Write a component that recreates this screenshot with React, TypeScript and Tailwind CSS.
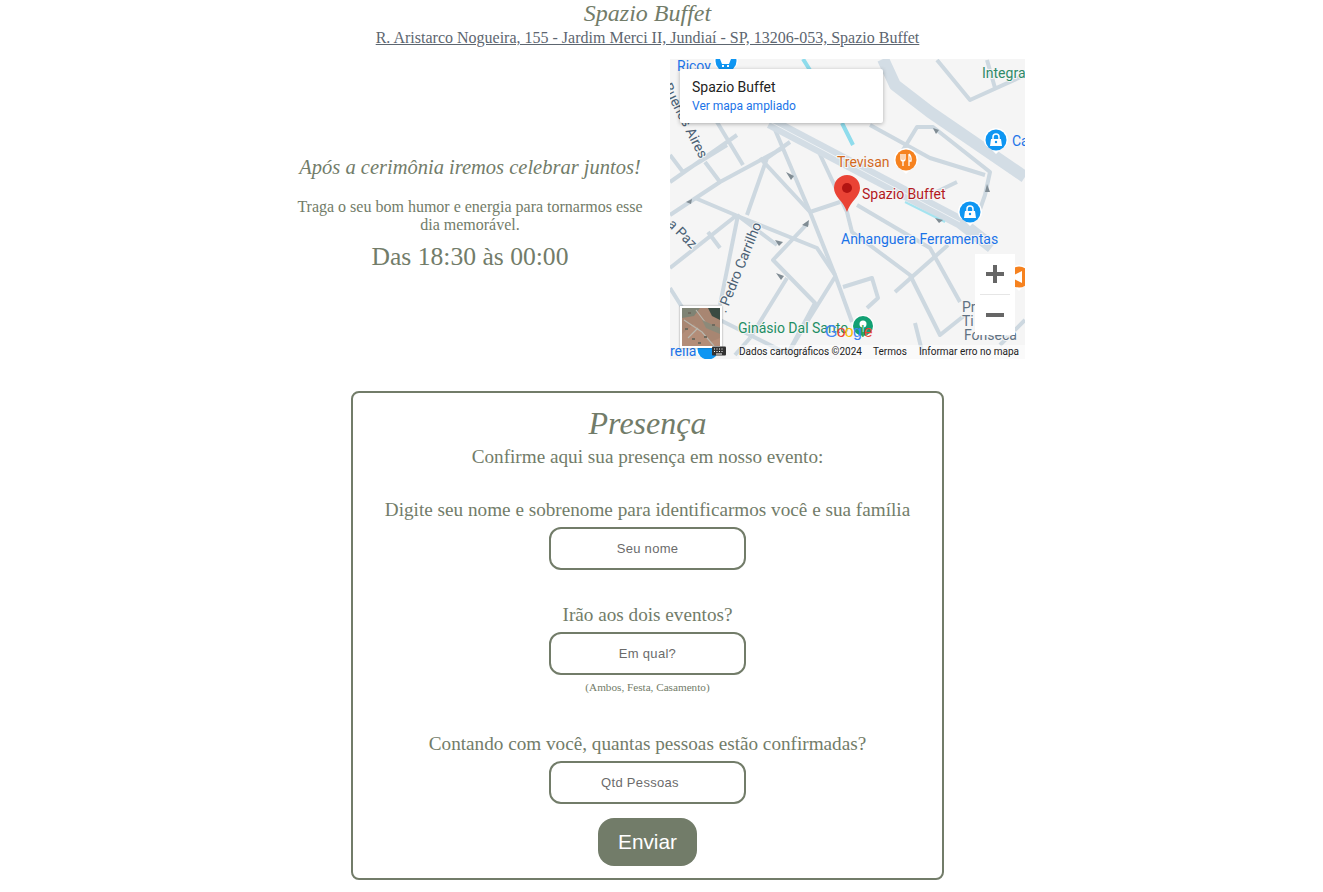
const serif = "font-['Liberation_Serif',serif]";
const script = "font-['Liberation_Serif',serif] italic font-normal";
const roboto = { fontFamily: "Roboto, sans-serif" };

const roads = [
  "M773 125 L810 212 L835 275 L852 322",
  "M808 223 L773 260 L815 303 L787 355",
  "M737 215 L777 245 M740 217 L817 248 L835 275",
  "M817 148 L847 212 L852 232 L910 275 L940 335 L965 315",
  "M857 205 L930 248 L960 302",
  "M948 245 L895 292",
  "M843 287 L872 278 L878 298 L867 308",
  "M835 277 L807 322 L787 355 M787 278 L750 338",
  "M915 323 L923 355 M738 215 L720 305 M708 232 L720 248 M737 215 L670 268",
  "M670 288 L687 315 M670 182 L737 135 M717 122 L743 165 M670 155 L683 172 L727 145",
  "M705 162 L720 182 M783 148 L720 182 L670 215 M790 142 L767 158 L747 215",
  "M760 158 L810 212 M695 198 L740 217 M810 212 L840 202",
  "M937 60 L970 100 L1025 75 M987 60 L995 88",
  "M903 150 L917 127 L933 127 L990 172 L985 195 L978 215",
  "M870 125 L930 158 L985 175 M957 182 L930 195",
  "M720 320 L790 355 M1000 345 L1025 320 M750 338 L735 355",
];

function Pin({ x, y, color }: { x: number; y: number; color: string }) {
  return (
    <g>
      <path d={`M${x - 12} ${y} a12 12 0 1 1 24 0 q0 6 -6 8 l-6 6 l-6 -6 q-6 -2 -6 -8z`} fill="#fff" />
      <circle cx={x} cy={y} r="10.5" fill={color} />
    </g>
  );
}

function Bag({ x, y }: { x: number; y: number }) {
  return (
    <g>
      <path d={`M${x - 3} ${y - 1} v-2 a3 3 0 0 1 6 0 v2`} fill="none" stroke="#fff" strokeWidth="1.500" />
      <path d={`M${x - 5} ${y - 1} h10 l1 7 h-12z`} fill="#fff" />
      <circle cx={x} cy={y + 2} r="1.200" fill="#0f96f2" />
    </g>
  );
}

function Label({ x, y, fill, children, transform }: { x?: number; y?: number; fill: string; children: string; transform?: string }) {
  return (
    <text x={x} y={y} fontSize="14" fill={fill} stroke="#f5f5f5" strokeWidth="2" paintOrder="stroke" transform={transform}>
      {children}
    </text>
  );
}

function MapDrawing() {
  return (
    <svg viewBox="670 59 355 300" className="absolute inset-0 h-full w-full" style={roboto}>
      <rect x="670" y="59" width="355" height="300" fill="#f5f5f5" />
      <path d="M803 59 L813 75 M842 123 L853 145" stroke="#8fdcec" strokeWidth="4" fill="none" />
      <g fill="none" stroke="#cdd8e0" strokeWidth="4" strokeLinejoin="round">
        {roads.map((d) => (
          <path key={d} d={d} />
        ))}
      </g>
      <path d="M883 59 L895 85 L930 112 L1025 177" fill="none" stroke="#d3dde5" strokeWidth="12" strokeLinejoin="round" />
      <path d="M770 122 L960 222 L992 247" fill="none" stroke="#d3dde5" strokeWidth="13" strokeLinejoin="round" />
      <path d="M770 122 L960 222" fill="none" stroke="#eef2f5" strokeWidth="1" />
      <path d="M905 202 L945 222" fill="none" stroke="#a5e3ef" strokeWidth="2" />
      <g fill="#808c94">
        <path d="M786 172 l8 4 l-3 4z M933 128 l6 2 l-3 4z M985 192 l2 -8 l3 8z M935 218 l8 2 l-4 3z" />
        <path d="M802 225 l7 -5 l-1 7z M776 273 l8 3 l-3 4z M775 240 l8 2 l-4 4z M686 202 l6 -3 l-1 5z" />
      </g>

      <Label x={677} y={71} fill="#1a73e8">Ricoy</Label>
      <Pin x={726} y={61} color="#0f96f2" />
      <path d="M720 59 h11 l-2 5 h-7z M722 65 h2 v2 h-2z M727 65 h2 v2 h-2z" fill="#fff" />
      <Label x={982} y={78} fill="#2f8a68">Integra</Label>
      <Label fill="#4a5f74" transform="translate(662.500 86) rotate(63)">Buenos Aires</Label>
      <Label fill="#4a5f74" transform="translate(667 225) rotate(45)">a Paz</Label>
      <Label fill="#4a5f74" transform="translate(725.700 313.500) rotate(-68)">. Pedro Carrilho</Label>

      <Pin x={996} y={140} color="#0f96f2" />
      <Bag x={996} y={140} />
      <Label x={1012} y={146} fill="#1a73e8">Ca</Label>
      <Pin x={970} y={212} color="#0f96f2" />
      <Bag x={970} y={212} />
      <Pin x={906} y={160} color="#f6821f" />
      <path d="M901 154 v5 a2 2 0 0 0 4 0 v-5 M903 154 v12 M909 154 v12 M909 154 q2.500 2 2 7 h-2" stroke="#fff" strokeWidth="1.300" fill="none" />
      <Label x={837} y={167} fill="#d2691e">Trevisan</Label>

      <Label x={862} y={199} fill="#b3191e">Spazio Buffet</Label>
      <path d="M847 212 C843 200 834 197 834 188 a13 13 0 0 1 26 0 C860 197 851 200 847 212z" fill="#ea4335" />
      <circle cx="847" cy="188" r="5" fill="#b31412" />

      <Label x={841} y={244} fill="#1a73e8">Anhanguera Ferramentas</Label>
      <Label x={738} y={333} fill="#1e8e64">Ginásio Dal Santo</Label>
      <circle cx="863" cy="326" r="11" fill="#fff" />
      <circle cx="863" cy="326" r="10" fill="#12a073" />
      <circle cx="863" cy="324" r="3.500" fill="#fff" />
      <path d="M862 326 h2 v6 h-2z" fill="#fff" />
      <Label x={962} y={312} fill="#5f7182">Pr</Label>
      <Label x={962} y={326} fill="#5f7182">Ti</Label>
      <Label x={964} y={340} fill="#5f7182">Fonseca</Label>
      <Pin x={1019} y={277} color="#f6821f" />
      <path d="M1014 275 l8 -4 v12 l-8 -4z" fill="#fff" />
      <Label x={670} y={356} fill="#1a73e8">rella</Label>
      <Pin x={708} y={349} color="#0f96f2" />
    </svg>
  );
}

function Satellite() {
  return (
    <svg viewBox="0 0 38 38" className="h-full w-full">
      <rect width="38" height="38" fill="#a88672" />
      <path d="M0 0 H18 L12 8 L0 10z" fill="#7f8374" />
      <path d="M26 0 H38 V12 L30 8z" fill="#3a4a42" />
      <path d="M0 26 L12 16 L28 34 L38 30 V38 H0z" fill="#b38d78" />
      <path d="M2 12 L20 24 L32 38 M14 2 L26 18 M6 30 L16 20" stroke="#b9b7ae" strokeWidth="1.200" fill="none" />
      <path d="M20 12 L38 20 V26 L24 20z" fill="#8c8a7a" />
      <path d="M3 20h3v2H3zM10 30h3v2h-3zM22 28h3v2h-3zM30 16h3v2h-3zM6 4h3v2H6zM16 34h3v2h-3z" fill="#6f6a5e" />
    </svg>
  );
}

function GoogleMap() {
  return (
    <div className="relative h-[300px] w-[355px] shrink-0 overflow-hidden bg-[#f5f5f5]" style={roboto}>
      <MapDrawing />

      <div className="absolute left-[10px] top-[10px] h-[54px] w-[203px] rounded-[2px] bg-white px-3 pt-[10px] shadow-[0_1px_4px_rgba(0,0,0,0.3)]">
        <p className="text-[14px] font-normal leading-4 text-[#222]">Spazio Buffet</p>
        <p className="mt-[3px] text-[12px] leading-4 text-[#1a73e8]">Ver mapa ampliado</p>
      </div>

      <div className="absolute left-[305px] top-[195px] flex h-[81px] w-[40px] flex-col items-center bg-white">
        <div className="flex h-10 w-full items-center justify-center">
          <span className="relative block h-[18px] w-[18px]">
            <span className="absolute left-0 top-[7px] h-1 w-[18px] bg-[#666]" />
            <span className="absolute left-[7px] top-0 h-[18px] w-1 bg-[#666]" />
          </span>
        </div>
        <div className="h-px w-[30px] bg-[#e6e6e6]" />
        <div className="flex h-10 w-full items-center justify-center">
          <span className="block h-1 w-[18px] bg-[#666]" />
        </div>
      </div>

      <div className="absolute left-[10px] top-[247px] h-[42px] w-[42px] border-2 border-white shadow-[0_0_2px_rgba(0,0,0,0.4)]">
        <Satellite />
      </div>

      <div className="absolute left-[155px] top-[263px] text-[16px] font-medium leading-5 tracking-[-0.8px] font-['Liberation_Sans',sans-serif]">
        <span className="text-[#4285f4]">G</span>
        <span className="text-[#ea4335]">o</span>
        <span className="text-[#fbbc05]">o</span>
        <span className="text-[#4285f4]">g</span>
        <span className="text-[#34a853]">l</span>
        <span className="text-[#ea4335]">e</span>
      </div>

      <div className="absolute bottom-0 left-[69px] flex h-[14px] w-[286px] items-center bg-white/50 text-[10px] leading-[14px] text-[#222]">
        <span className="w-[134px] whitespace-nowrap">Dados cartográficos ©2024</span>
        <span className="w-[46px]">Termos</span>
        <span className="whitespace-nowrap">Informar erro no mapa</span>
      </div>

      <svg viewBox="0 0 14 9" className="absolute left-[42px] top-[287px] h-[10px] w-[14px]">
        <rect width="14" height="9" rx="1" fill="#333" />
        <path d="M2 2h1v1H2zM4.500 2h1v1h-1zM7 2h1v1H7zM9.500 2h1v1h-1zM2 4.500h1v1H2zM4.500 4.500h1v1h-1zM7 4.500h1v1H7zM9.500 4.500h1v1h-1zM4 7h6v1H4z" fill="#fff" />
      </svg>
    </div>
  );
}

function Field({ label, placeholder, type = "text", className }: { label: string; placeholder: string; type?: string; className: string }) {
  return (
    <div className={`flex flex-col items-center ${className}`}>
      <label className="text-[19.2px] leading-[22px]">{label}</label>
      <input
        type={type}
        placeholder={placeholder}
        className="mt-[6px] h-[43px] w-[197px] rounded-[12px] border-2 border-[#727c69] bg-white text-center font-['Liberation_Sans',sans-serif] text-[13px] tracking-[0.3px] outline-none placeholder:text-[#6b6b6b]"
      />
    </div>
  );
}

export default function App() {
  return (
    <div className={`h-[892px] w-[1323px] overflow-hidden bg-white text-[#727c69] ${serif}`}>
      <div className="w-[1295px] text-center">
        <h1 className={`h-[27px] text-[24px] leading-[27px] ${script}`}>Spazio Buffet</h1>
        <a className="block h-[22px] text-[16px] leading-[22px] text-[#5d6670] underline">
          R. Aristarco Nogueira, 155 - Jardim Merci II, Jundiaí - SP, 13206-053, Spazio Buffet
        </a>
      </div>

      <div className="ml-[295px] mt-[10px] flex w-[730px] items-center gap-[25px]">
        <div className="w-[350px] pt-[7px] text-center">
          <h2 className={`whitespace-nowrap text-[20.5px] leading-[30px] ${script}`}>Após a cerimônia iremos celebrar juntos!</h2>
          <p className="mt-[16px] text-[16px] leading-[18px]">Traga o seu bom humor e energia para tornarmos esse dia memorável.</p>
          <p className="mt-[7px] text-[25.6px] leading-[32px]">Das 18:30 às 00:00</p>
        </div>
        <GoogleMap />
      </div>

      <form className="ml-[351px] mt-[32px] flex h-[489px] w-[593px] flex-col items-center rounded-[8px] border-2 border-[#727c69] pt-[12px] text-center">
        <h2 className={`h-[36px] text-[32px] leading-[36px] ${script}`}>Presença</h2>
        <p className="mt-[4px] text-[19.2px] leading-[23px]">Confirme aqui sua presença em nosso evento:</p>
        <Field className="mt-[31px]" label="Digite seu nome e sobrenome para identificarmos você e sua família" placeholder="Seu nome" />
        <Field className="mt-[34px]" label="Irão aos dois eventos?" placeholder="Em qual?" />
        <p className="mt-[6px] text-[11.2px] leading-[12px]">(Ambos, Festa, Casamento)</p>
        <Field className="mt-[40px]" label="Contando com você, quantas pessoas estão confirmadas?" placeholder="Qtd Pessoas" type="number" />
        <button type="button" className="mt-[14px] h-[48px] w-[99px] rounded-[16px] bg-[#727c69] font-['Liberation_Sans',sans-serif] text-[20.8px] text-white">
          Enviar
        </button>
      </form>
    </div>
  );
}
